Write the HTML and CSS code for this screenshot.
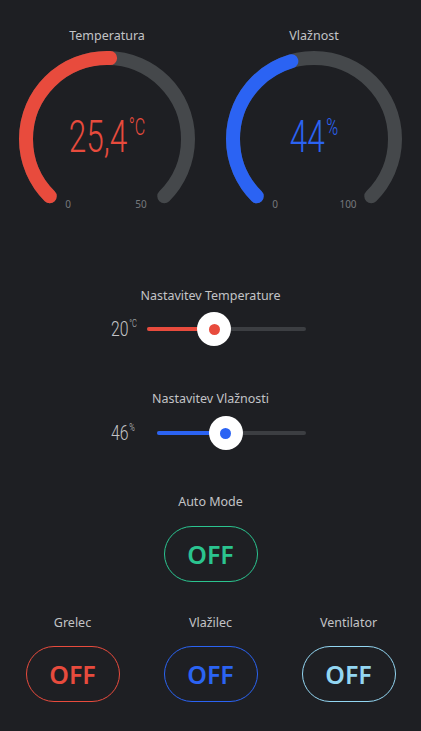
FILE: index.html
```html
<!DOCTYPE html>
<html lang="sl">
<head>
<meta charset="utf-8">
<title>Climate control</title>
<link rel="stylesheet" href="styles.css">
</head>
<body>
<main class="app">
  <section class="gauges">
    <div class="gauge-card">
      <div class="label">Temperatura</div>
      <div class="gauge">
        <svg class="gauge-svg" width="176" height="160" viewBox="0 0 176 160">
          <path class="gauge-track" d="M30.72 145.28 A81 81 0 1 1 145.28 145.28"/>
          <path class="gauge-fill gauge-fill-temp" pathLength="270" stroke-dasharray="137.2 1000" d="M30.72 145.28 A81 81 0 1 1 145.28 145.28"/>
        </svg>
        <div class="gauge-value value-temp"><span class="num">25,4</span><span class="unit">°C</span></div>
        <span class="gauge-min">0</span>
        <span class="gauge-max">50</span>
      </div>
    </div>
    <div class="gauge-card">
      <div class="label">Vlažnost</div>
      <div class="gauge">
        <svg class="gauge-svg" width="176" height="160" viewBox="0 0 176 160">
          <path class="gauge-track" d="M30.72 145.28 A81 81 0 1 1 145.28 145.28"/>
          <path class="gauge-fill gauge-fill-hum" pathLength="270" stroke-dasharray="118.8 1000" d="M30.72 145.28 A81 81 0 1 1 145.28 145.28"/>
        </svg>
        <div class="gauge-value value-hum"><span class="num">44</span><span class="unit">%</span></div>
        <span class="gauge-min">0</span>
        <span class="gauge-max">100</span>
      </div>
    </div>
  </section>

  <section class="setting setting-temp">
    <div class="label">Nastavitev Temperature</div>
    <div class="slider-row">
      <div class="slider-value"><span class="num">20</span><span class="unit">°C</span></div>
      <div class="track track-temp">
        <div class="track-fill fill-temp" style="width:42.4%"></div>
        <div class="thumb" style="left:42.4%"><span class="thumb-dot dot-temp"></span></div>
      </div>
    </div>
  </section>

  <section class="setting setting-hum">
    <div class="label">Nastavitev Vlažnosti</div>
    <div class="slider-row">
      <div class="slider-value"><span class="num">46</span><span class="unit">%</span></div>
      <div class="track track-hum">
        <div class="track-fill fill-hum" style="width:46%"></div>
        <div class="thumb" style="left:46%"><span class="thumb-dot dot-hum"></span></div>
      </div>
    </div>
  </section>

  <section class="auto">
    <div class="label">Auto Mode</div>
    <button class="toggle toggle-green">OFF</button>
  </section>

  <section class="devices">
    <div class="device">
      <div class="label">Grelec</div>
      <button class="toggle toggle-red">OFF</button>
    </div>
    <div class="device">
      <div class="label">Vlažilec</div>
      <button class="toggle toggle-blue">OFF</button>
    </div>
    <div class="device">
      <div class="label">Ventilator</div>
      <button class="toggle toggle-cyan">OFF</button>
    </div>
  </section>
</main>
</body>
</html>
```

FILE: styles.css
```css
* { box-sizing: border-box; }

html, body {
  margin: 0;
  padding: 0;
  background: #1e1f23;
}

body {
  width: 421px;
  height: 731px;
  overflow: hidden;
  font-family: "Noto Sans", "Open Sans", sans-serif;
  color: #c4c5c8;
}

.app {
  display: flex;
  flex-direction: column;
  align-items: stretch;
}

.label {
  font-size: 12.5px;
  line-height: 16px;
  color: #c2c3c6;
  text-align: center;
}

/* Gauges */
.gauges {
  display: grid;
  grid-template-columns: repeat(2, 207px);
  justify-content: center;
  padding-top: 28px;
}

.gauge-card {
  display: flex;
  flex-direction: column;
  align-items: center;
  gap: 7px;
}

.gauge {
  position: relative;
  width: 176px;
  height: 160px;
}

.gauge-svg { display: block; }

.gauge-track {
  fill: none;
  stroke: #45484b;
  stroke-width: 14;
  stroke-linecap: round;
}

.gauge-fill {
  fill: none;
  stroke-width: 14;
  stroke-linecap: round;
}

.gauge-fill-temp { stroke: #e84b3d; }
.gauge-fill-hum { stroke: #2b63f3; }

.gauge-value {
  position: absolute;
  left: 0;
  right: 0;
  top: 66px;
  display: flex;
  justify-content: center;
  align-items: flex-start;
  font-family: Roboto, "Liberation Sans", sans-serif;
  font-weight: 300;
  transform: scaleX(0.7);
}

.gauge-value .num {
  font-size: 45px;
  line-height: 40px;
}

.gauge-value .unit {
  font-size: 23px;
  line-height: 23px;
  margin-top: -1px;
  margin-left: 2px;
}

.value-temp { color: #e84b3d; }
.value-hum { color: #2b63f3; }

.gauge-min,
.gauge-max {
  position: absolute;
  top: 147px;
  font-size: 10px;
  line-height: 12px;
  color: #76787c;
  transform: translateX(-50%);
}

.gauge-min { left: 49px; }
.gauge-max { left: 122px; }

/* Sliders */
.setting {
  display: flex;
  flex-direction: column;
  align-items: center;
  gap: 8px;
}

.setting-temp { margin-top: 77px; }
.setting-hum { margin-top: 45px; gap: 9px; }

.slider-row {
  width: 195px;
  height: 34px;
  margin-right: 4px;
  display: flex;
  align-items: center;
}

.slider-value {
  display: flex;
  align-items: flex-start;
  font-family: Roboto, "Liberation Sans", sans-serif;
  font-weight: 300;
  color: #c4c5c8;
  transform: scaleX(0.75);
  transform-origin: left center;
  width: 36px;
}

.slider-value .num {
  font-size: 21px;
  line-height: 20px;
}

.slider-value .unit {
  font-size: 10px;
  line-height: 10px;
  margin-left: 1px;
}

.track {
  position: relative;
  flex: 1;
  height: 4px;
  border-radius: 2px;
  background: #3c3e42;
}

.track-hum { margin-left: 10px; }

.track-fill {
  height: 100%;
  border-radius: 2px;
}

.fill-temp { background: #e84b3d; }
.fill-hum { background: #2b63f3; }

.thumb {
  position: absolute;
  top: 50%;
  width: 34px;
  height: 34px;
  border-radius: 50%;
  background: #ffffff;
  transform: translate(-50%, -50%);
  display: flex;
  align-items: center;
  justify-content: center;
}

.thumb-dot {
  width: 11px;
  height: 11px;
  border-radius: 50%;
}

.dot-temp { background: #e84b3d; }
.dot-hum { background: #2b63f3; }

/* Toggles */
.auto {
  margin-top: 44px;
  display: flex;
  flex-direction: column;
  align-items: center;
  gap: 16px;
}

.toggle {
  width: 94px;
  height: 56px;
  border-radius: 28px;
  background: transparent;
  border: 1.5px solid currentColor;
  font-family: "Noto Sans", "Open Sans", sans-serif;
  font-size: 25px;
  font-weight: 600;
  line-height: 1;
  padding: 0;
  display: flex;
  align-items: center;
  justify-content: center;
  padding-top: 1px;
}

.toggle-green { color: #2bc48f; }
.toggle-red { color: #e84b3d; }
.toggle-blue { color: #2b63f3; }
.toggle-cyan { color: #93d6f2; }

.devices {
  margin-top: 33px;
  display: grid;
  grid-template-columns: repeat(3, 138px);
  justify-content: center;
}

.device {
  display: flex;
  flex-direction: column;
  align-items: center;
  gap: 15px;
}
```
